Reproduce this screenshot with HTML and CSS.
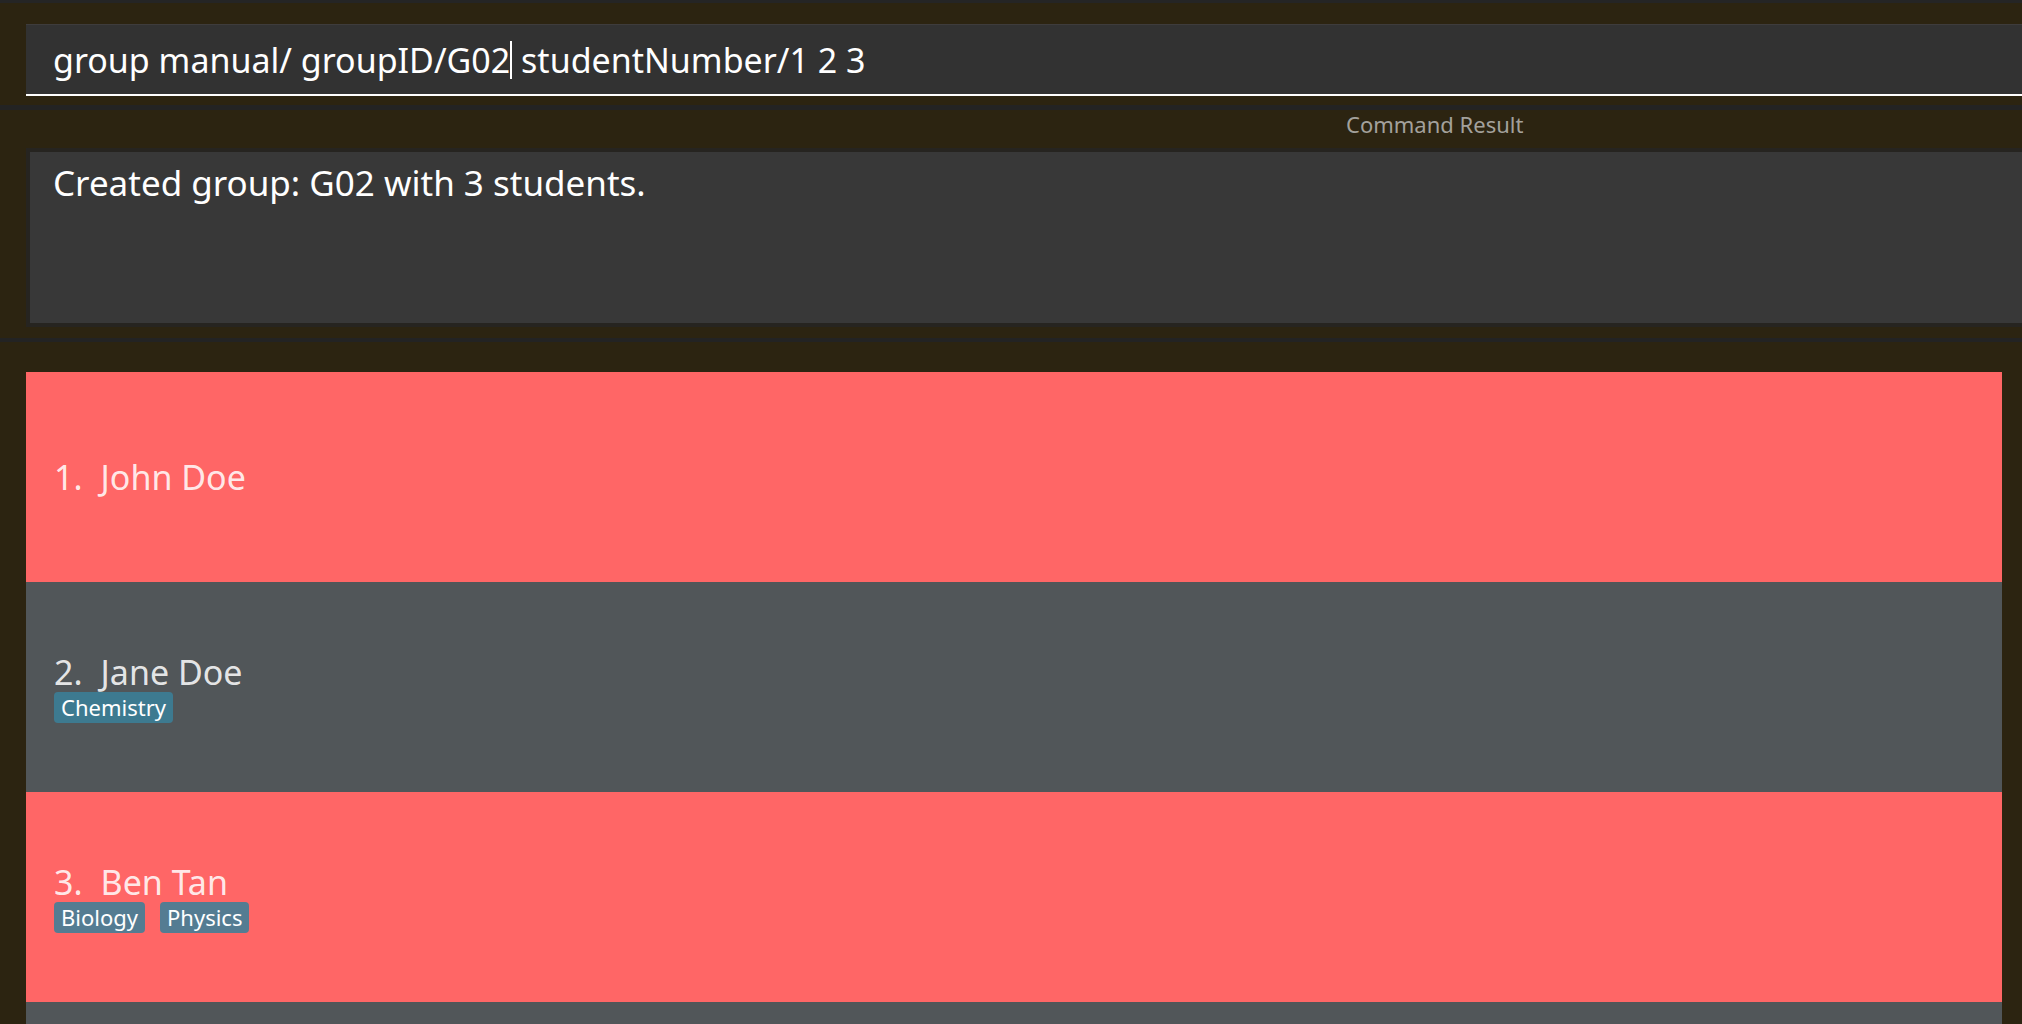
FILE: index.html
```html
<!DOCTYPE html>
<html lang="en">
<head>
<meta charset="utf-8">
<title>Address Book</title>
<link rel="stylesheet" href="styles.css">
</head>
<body>
<div class="topbar"></div>
<section class="cmd-pane">
  <div class="cmd-box">
    <span class="cmd-text">group manual/ groupID/G02</span><span class="caret"></span><span class="cmd-text">&nbsp;studentNumber/1 2 3</span>
  </div>
</section>
<div class="divider"></div>
<section class="result-pane">
  <div class="result-label">Command Result</div>
  <div class="result-box">Created group: G02 with 3 students.</div>
</section>
<div class="divider thin"></div>
<section class="list-pane">
  <div class="list">
    <div class="card odd">
      <div class="name-line"><span class="idx">1.</span><span class="name">John Doe</span></div>
    </div>
    <div class="card even">
      <div class="name-line"><span class="idx">2.</span><span class="name">Jane Doe</span></div>
      <div class="tags"><span class="tag">Chemistry</span></div>
    </div>
    <div class="card odd">
      <div class="name-line"><span class="idx">3.</span><span class="name">Ben Tan</span></div>
      <div class="tags"><span class="tag">Biology</span><span class="tag">Physics</span></div>
    </div>
    <div class="card even"></div>
  </div>
</section>
</body>
</html>
```
FILE: styles.css
```css
html, body {
  margin: 0;
  padding: 0;
}
body {
  background: #2c2411;
  font-family: "Noto Sans", "Open Sans", "DejaVu Sans", sans-serif;
  width: 2022px;
  height: 1024px;
  overflow: hidden;
}
.topbar {
  height: 3px;
  background: #252525;
}
.cmd-pane {
  padding: 21px 0 9px 26px;
}
.cmd-box {
  height: 69px;
  background: #323232;
  border-top: 1px solid #3e3c3c;
  border-bottom: 2px solid #ffffff;
  padding-left: 27px;
  display: flex;
  align-items: center;
  color: #ffffff;
  font-size: 34px;
  white-space: pre;
}
.caret {
  display: inline-block;
  width: 2px;
  height: 38px;
  background: #ffffff;
}
.divider {
  height: 5px;
  background: #232323;
}
.divider.thin {
  height: 4px;
}
.result-pane {
  padding: 0 0 11px 0;
}
.result-label {
  height: 28px;
  line-height: 28px;
  padding-left: 1346px;
  font-size: 22px;
  color: #a3a19c;
}
.result-box {
  margin-top: 10px;
  margin-left: 26px;
  box-sizing: content-box;
  border: 4px solid #262420;
  border-right: none;
  background: #383838;
  padding: 8px 0 0 23px;
  height: 163px;
  color: #ffffff;
  font-size: 35px;
  line-height: 46px;
}
.list-pane {
  padding: 30px 20px 0 26px;
}
.card {
  height: 210px;
  box-sizing: border-box;
  padding-left: 28px;
  display: flex;
  flex-direction: column;
  justify-content: center;
  color: rgba(255, 255, 255, 0.87);
}
.card.odd {
  background: #ff6666;
}
.card.even {
  background: #515659;
}
.name-line {
  display: flex;
  gap: 18px;
  font-size: 34px;
  line-height: 40px;
}
.tags {
  display: flex;
  gap: 15px;
}
.tag {
  font-size: 22px;
  line-height: 29px;
  padding: 1px 7px;
  border-radius: 4px;
  background: rgba(59, 128, 153, 0.87);
  color: #ffffff;
}
```
